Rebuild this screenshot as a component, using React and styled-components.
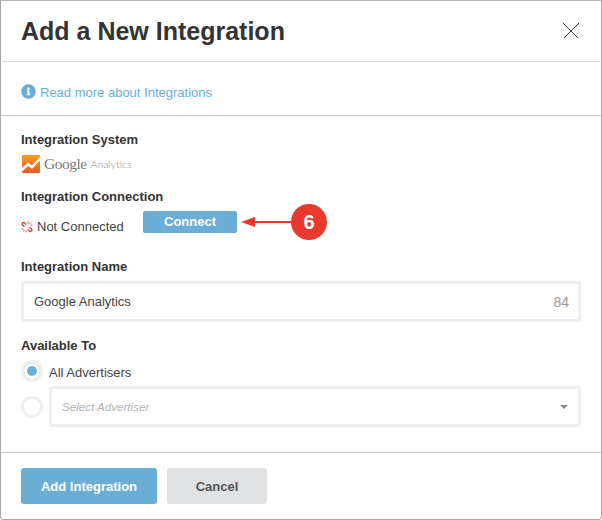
import React from 'react';
import styled, { createGlobalStyle } from 'styled-components';
import { FaInfoCircle } from 'react-icons/fa';

const GlobalStyle = createGlobalStyle`
    html, body {
        margin: 0;
        padding: 0;
        background: #ffffff;
    }
    body {
        font-family: "Liberation Sans", Arial, sans-serif;
    }
`

function App() {
    return (
        <Modal>
            <GlobalStyle />
            <Header>
                <Title>Add a New Integration</Title>
                <CloseButton aria-label="Close">
                    <svg width="16" height="16" viewBox="0 0 16 16" shapeRendering="crispEdges">
                        <path d="M0.5 0.5L15.5 15.5M15.5 0.5L0.5 15.5" stroke="#444444" strokeWidth="1" fill="none" />
                    </svg>
                </CloseButton>
            </Header>

            <InfoRow>
                <FaInfoCircle size={15} color="#6aaed6" />
                <InfoLink href="#">Read more about Integrations</InfoLink>
            </InfoRow>

            <Body>
                <Field $height={57}>
                    <Label>Integration System</Label>
                    <Logo>
                        <svg width="18" height="18" viewBox="0 0 18 18">
                            <defs>
                                <linearGradient id="logoFill" x1="0" y1="0" x2="0" y2="1">
                                    <stop offset="0" stopColor="#fb9d1a" />
                                    <stop offset="1" stopColor="#e9591f" />
                                </linearGradient>
                            </defs>
                            <rect width="18" height="18" rx="1" fill="url(#logoFill)" />
                            <path d="M0 13L6 7.5L10 10.5L18 2V5.5L10 14L6 11L0 16.5Z" fill="#ffffff" />
                        </svg>
                        <GoogleWord>Google</GoogleWord>
                        <AnalyticsWord>Analytics</AnalyticsWord>
                    </Logo>
                </Field>

                <Field $height={70}>
                    <Label>Integration Connection</Label>
                    <ConnectionRow>
                        <Status>
                            <svg width="12" height="12" viewBox="0 0 12 12" fill="none" stroke="#e8392f" strokeWidth="1.3">
                                <path d="M5.2 3.6L3.6 2Q2.6 1 1.6 2Q0.6 3 1.6 4L3.4 5.8" />
                                <path d="M6.8 8.4L8.4 10Q9.4 11 10.4 10Q11.4 9 10.4 8L8.6 6.2" />
                                <path d="M7 0.6V2.6M9.5 1.4L8.5 3M11.4 4H9.4M5 11.4V9.4M2.5 10.6L3.5 9M0.6 8H2.6" strokeWidth="0.9" />
                            </svg>
                            Not Connected
                        </Status>
                        <ConnectButton>Connect</ConnectButton>
                        <Annotation>
                            <svg width="50" height="10" viewBox="0 0 50 10">
                                <path d="M0 5L14 0V4H50V6H14V10Z" fill="#e8392f" />
                            </svg>
                            <Badge>6</Badge>
                        </Annotation>
                    </ConnectionRow>
                </Field>

                <Field $height={79}>
                    <Label>Integration Name</Label>
                    <InputBox>
                        <InputText>Google Analytics</InputText>
                        <Counter>84</Counter>
                    </InputBox>
                </Field>

                <Field>
                    <Label>Available To</Label>
                    <RadioRow>
                        <Radio $checked />
                        <RadioText>All Advertisers</RadioText>
                    </RadioRow>
                    <SelectRow>
                        <Radio />
                        <SelectBox>
                            <Placeholder>Select Advertiser</Placeholder>
                            <Caret />
                        </SelectBox>
                    </SelectRow>
                </Field>
            </Body>

            <Footer>
                <FooterButton $primary>Add Integration</FooterButton>
                <FooterButton $width={100}>Cancel</FooterButton>
            </Footer>
        </Modal>
    )
}

export default App;

const Modal = styled.div`
    box-sizing: border-box;
    width: 602px;
    height: 520px;
    background: #ffffff;
    border: 1px solid #a8a8a8;
    border-top-color: #b4b4b4;
    border-radius: 0 0 4px 4px;
    display: flex;
    flex-direction: column;
    color: #333333;
    overflow: hidden;
`

const Header = styled.div`
    box-sizing: border-box;
    height: 61px;
    flex: none;
    margin: 0 1px;
    padding: 0 21px 0 19px;
    display: flex;
    align-items: center;
    justify-content: space-between;
    border-bottom: 1px solid #dddddd;
`

const Title = styled.h1`
    margin: 0;
    font-size: 25px;
    line-height: 30px;
    font-weight: 700;
    color: #333333;
`

const CloseButton = styled.button`
    border: 0;
    background: none;
    padding: 0;
    display: flex;
`

const InfoRow = styled.div`
    box-sizing: border-box;
    height: 54px;
    flex: none;
    padding: 7px 20px 0;
    display: flex;
    align-items: center;
    gap: 4px;
    border-bottom: 1px solid #c8c8c8;

    svg {
        margin-bottom: 2px;
    }
`

const InfoLink = styled.a`
    font-size: 13px;
    color: #6aaed6;
    text-decoration: none;
`

const Body = styled.div`
    flex: 1;
    padding: 16px 20px 0;
`

const Field = styled.div`
    height: ${props => props.$height ? `${props.$height}px` : 'auto'};
`

const Label = styled.div`
    font-size: 13px;
    line-height: 16px;
    font-weight: 700;
    color: #333333;
`

const Logo = styled.div`
    display: flex;
    align-items: center;
    height: 20px;
    margin: 6px 0 0 1px;
`

const GoogleWord = styled.span`
    font-family: "Liberation Serif", serif;
    font-size: 15.5px;
    letter-spacing: -0.5px;
    color: #7c7c7c;
    margin-left: 4px;
`

const AnalyticsWord = styled.span`
    font-family: "Lato", sans-serif;
    font-weight: 300;
    font-size: 10.5px;
    color: #8f8f8f;
    margin-left: 4px;
`

const ConnectionRow = styled.div`
    position: relative;
    display: flex;
    align-items: flex-start;
    margin-top: 6px;
`

const Status = styled.div`
    display: flex;
    align-items: center;
    gap: 4px;
    font-size: 13px;
    line-height: 16px;
    color: #444444;
    margin-top: 8px;
    width: 122px;
`

const ConnectButton = styled.button`
    width: 94px;
    height: 22px;
    border: 0;
    border-radius: 2px;
    background: #6aaed6;
    color: #ffffff;
    font-family: inherit;
    font-size: 13px;
    font-weight: 700;
    padding: 0 0 2px;
`

const Annotation = styled.div`
    position: absolute;
    left: 220px;
    top: -7px;
    display: flex;
    align-items: center;
`

const Badge = styled.div`
    width: 36px;
    height: 36px;
    border-radius: 50%;
    background: #e8392f;
    color: #ffffff;
    font-size: 20px;
    font-weight: 700;
    display: flex;
    align-items: center;
    justify-content: center;
`

const InputBox = styled.div`
    box-sizing: border-box;
    height: 41px;
    margin-top: 6px;
    border: 3px solid #efefef;
    border-radius: 3px;
    padding: 0 9px 0 10px;
    display: flex;
    align-items: center;
    justify-content: space-between;
    font-size: 13px;
`

const InputText = styled.span`
    color: #444444;
`

const Counter = styled.span`
    font-size: 14px;
    color: #999999;
`

const RadioRow = styled.div`
    display: flex;
    align-items: center;
    margin-top: 6px;
`

const Radio = styled.span`
    box-sizing: border-box;
    flex: none;
    width: 22px;
    height: 22px;
    border: 3px solid #efefef;
    border-radius: 50%;
    background: ${props => props.$checked ? '#6aaed6' : '#ffffff'};
    box-shadow: ${props => props.$checked ? 'inset 0 0 0 3px #ffffff' : 'none'};
`

const RadioText = styled.span`
    font-size: 13px;
    color: #444444;
    margin: 2px 0 0 6px;
`

const SelectRow = styled.div`
    display: flex;
    align-items: center;
    gap: 6px;
    margin-top: 4px;
`

const SelectBox = styled.div`
    box-sizing: border-box;
    flex: 1;
    height: 41px;
    border: 3px solid #efefef;
    border-radius: 3px;
    padding: 0 10px;
    display: flex;
    align-items: center;
    justify-content: space-between;
`

const Placeholder = styled.span`
    font-size: 11.6px;
    font-style: italic;
    color: #b4b4b4;
`

const Caret = styled.span`
    width: 0;
    height: 0;
    border-left: 4px solid transparent;
    border-right: 4px solid transparent;
    border-top: 4px solid #888888;
`

const Footer = styled.div`
    box-sizing: border-box;
    height: 67px;
    flex: none;
    padding: 15px 20px 0;
    display: flex;
    gap: 10px;
    align-items: flex-start;
    border-top: 1px solid #c8c8c8;
`

const FooterButton = styled.button`
    width: ${props => props.$width ? `${props.$width}px` : '136px'};
    height: 36px;
    border: 0;
    border-radius: 3px;
    background: ${props => props.$primary ? '#6aaed6' : '#e0e1e2'};
    color: ${props => props.$primary ? '#ffffff' : '#555555'};
    font-family: inherit;
    font-size: 13px;
    font-weight: 700;
    padding: 0;
`
